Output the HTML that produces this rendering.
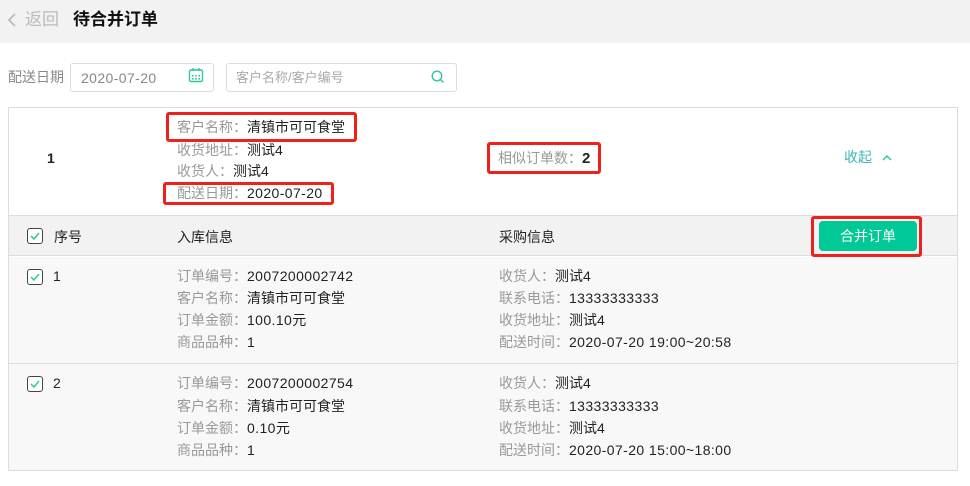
<!DOCTYPE html>
<html><head><meta charset="utf-8"><style>
*{margin:0;padding:0;box-sizing:border-box}
body{width:970px;height:486px;background:#fff;font-family:"Liberation Sans","Noto Sans CJK SC",sans-serif;font-size:14px;color:#222;position:relative;overflow:hidden}
.a{position:absolute;white-space:nowrap;line-height:22px}
.g{color:#999}
.n{letter-spacing:0.4px}
.top{position:absolute;left:0;top:0;width:970px;height:43px;background:#f2f2f2}
.box{position:absolute;border:1px solid #ddd;border-radius:3px;background:#fff}
.red{position:absolute;border:3px solid #f0201a;border-radius:3px}
.cb{position:absolute;width:16px;height:16px;border:1px solid #444;border-radius:3px;background:#fff}
.cb svg{position:absolute;left:2px;top:2px}
</style></head><body>
<div class="top"></div>
<svg class="a" style="left:7px;top:12px" width="10" height="16" viewBox="0 0 10 16"><path d="M8 2 L2 8 L8 14" fill="none" stroke="#bbb" stroke-width="1.8"/></svg>
<div class="a" style="left:25px;top:8px;font-size:17px;color:#bbb;line-height:24px">返回</div>
<div class="a" style="left:73px;top:8px;font-size:17px;font-weight:bold;color:#111;line-height:24px">待合并订单</div>

<div class="a g" style="left:8px;top:66px;color:#888">配送日期</div>
<div class="box" style="left:70px;top:63px;width:144px;height:29px"></div>
<div class="a g n" style="left:81px;top:67px;color:#888">2020-07-20</div>
<svg class="a" style="left:188px;top:67px" width="16" height="16" viewBox="0 0 16 16"><rect x="1.5" y="3" width="13" height="11.5" rx="1.5" fill="none" stroke="#2dc8a0" stroke-width="1.4"/><line x1="5" y1="1" x2="5" y2="4" stroke="#2dc8a0" stroke-width="1.4"/><line x1="11" y1="1" x2="11" y2="4" stroke="#2dc8a0" stroke-width="1.4"/><g fill="#2dc8a0"><rect x="4" y="8" width="1.6" height="1.6"/><rect x="7.2" y="8" width="1.6" height="1.6"/><rect x="10.4" y="8" width="1.6" height="1.6"/><rect x="4" y="11" width="1.6" height="1.6"/><rect x="7.2" y="11" width="1.6" height="1.6"/><rect x="10.4" y="11" width="1.6" height="1.6"/></g></svg>
<div class="box" style="left:226px;top:63px;width:231px;height:29px"></div>
<div class="a" style="left:236px;top:67px;color:#aaa;font-size:13px">客户名称/客户编号</div>
<svg class="a" style="left:431px;top:70px" width="14" height="14" viewBox="0 0 14 14"><circle cx="6" cy="6" r="4.8" fill="none" stroke="#2dc8a0" stroke-width="1.4"/><line x1="9.5" y1="9.5" x2="12.5" y2="12.5" stroke="#2dc8a0" stroke-width="1.4"/></svg>

<div style="position:absolute;left:8px;top:107px;width:950px;height:364px;border:1px solid #ddd;background:#fff"></div>
<div style="position:absolute;left:9px;top:215px;width:948px;height:41px;background:#f2f2f2;border-top:1px solid #ddd;border-bottom:1px solid #ddd"></div>
<div style="position:absolute;left:9px;top:257px;width:948px;height:213px;background:#f8f8f8"></div>
<div style="position:absolute;left:9px;top:363px;width:948px;height:1px;background:#ddd"></div>

<div class="a" style="left:47px;top:147px;font-weight:bold">1</div>
<div class="a" style="left:177px;top:116px"><span class="g">客户名称：</span>清镇市可可食堂</div>
<div class="a" style="left:177px;top:139px"><span class="g">收货地址：</span>测试4</div>
<div class="a" style="left:177px;top:160px"><span class="g">收货人：</span>测试4</div>
<div class="a" style="left:177px;top:182px"><span class="g">配送日期：</span><span class="n">2020-07-20</span></div>
<div class="red" style="left:166px;top:112px;width:191px;height:30px"></div>
<div class="red" style="left:163px;top:182px;width:171px;height:23px"></div>
<div class="a" style="left:498px;top:147px"><span class="g">相似订单数：</span><b style="font-size:15px">2</b></div>
<div class="red" style="left:487px;top:142px;width:114px;height:32px"></div>
<div class="a" style="left:844px;top:146px;color:#3cb8b0">收起 <svg width="14" height="10" viewBox="0 0 14 10" style="margin-left:4px"><path d="M3 8 L7 4 L11 8" fill="none" stroke="#2dc8a0" stroke-width="1.5"/></svg></div>

<div class="cb" style="left:27px;top:228px"><svg width="10" height="10" viewBox="0 0 10 10"><path d="M1 5 L4 8 L9 2" fill="none" stroke="#2dc8a0" stroke-width="1.5"/></svg></div>
<div class="a" style="left:54px;top:226px">序号</div>
<div class="a" style="left:177px;top:226px">入库信息</div>
<div class="a" style="left:499px;top:226px">采购信息</div>
<div style="position:absolute;left:819px;top:221px;width:98px;height:30px;background:#00c896;border-radius:4px;color:#fff;text-align:center;line-height:30px">合并订单</div>
<div class="red" style="left:811px;top:216px;width:111px;height:41px"></div>

<div class="cb" style="left:27px;top:269px"><svg width="10" height="10" viewBox="0 0 10 10"><path d="M1 5 L4 8 L9 2" fill="none" stroke="#2dc8a0" stroke-width="1.5"/></svg></div>
<div class="a" style="left:53px;top:265px">1</div>
<div class="a" style="left:177px;top:265px"><span class="g">订单编号：</span><span class="n">2007200002742</span></div>
<div class="a" style="left:177px;top:287px"><span class="g">客户名称：</span>清镇市可可食堂</div>
<div class="a" style="left:177px;top:309px"><span class="g">订单金额：</span><span class="n">100.10</span>元</div>
<div class="a" style="left:177px;top:331px"><span class="g">商品品种：</span>1</div>
<div class="a" style="left:499px;top:265px"><span class="g">收货人：</span>测试4</div>
<div class="a" style="left:499px;top:287px"><span class="g">联系电话：</span><span class="n">13333333333</span></div>
<div class="a" style="left:499px;top:309px"><span class="g">收货地址：</span>测试4</div>
<div class="a" style="left:499px;top:331px"><span class="g">配送时间：</span><span class="n">2020-07-20 19:00~20:58</span></div>

<div class="cb" style="left:27px;top:376px"><svg width="10" height="10" viewBox="0 0 10 10"><path d="M1 5 L4 8 L9 2" fill="none" stroke="#2dc8a0" stroke-width="1.5"/></svg></div>
<div class="a" style="left:53px;top:372px">2</div>
<div class="a" style="left:177px;top:372px"><span class="g">订单编号：</span><span class="n">2007200002754</span></div>
<div class="a" style="left:177px;top:395px"><span class="g">客户名称：</span>清镇市可可食堂</div>
<div class="a" style="left:177px;top:417px"><span class="g">订单金额：</span><span class="n">0.10</span>元</div>
<div class="a" style="left:177px;top:439px"><span class="g">商品品种：</span>1</div>
<div class="a" style="left:499px;top:372px"><span class="g">收货人：</span>测试4</div>
<div class="a" style="left:499px;top:395px"><span class="g">联系电话：</span><span class="n">13333333333</span></div>
<div class="a" style="left:499px;top:417px"><span class="g">收货地址：</span>测试4</div>
<div class="a" style="left:499px;top:439px"><span class="g">配送时间：</span><span class="n">2020-07-20 15:00~18:00</span></div>
</body></html>
